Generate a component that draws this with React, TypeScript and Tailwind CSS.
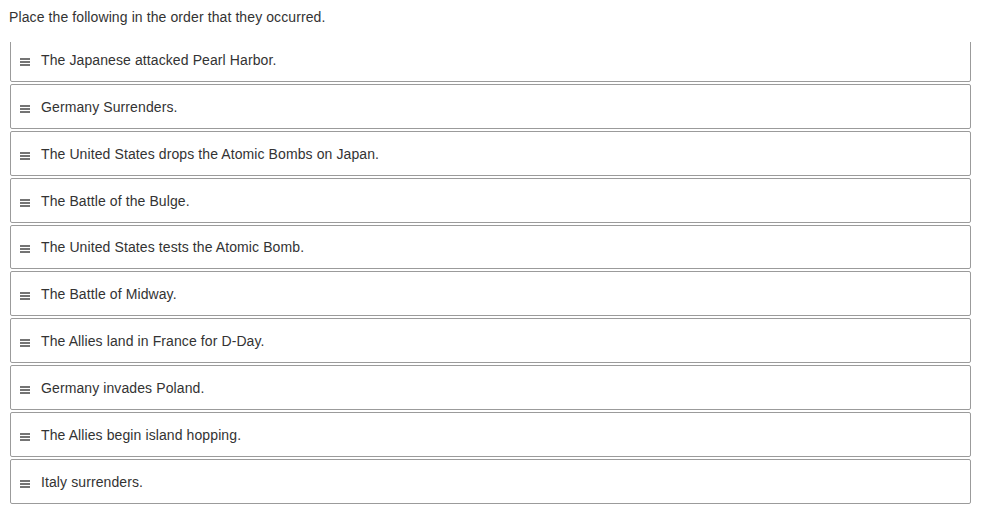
const items = [
  "The Japanese attacked Pearl Harbor.",
  "Germany Surrenders.",
  "The United States drops the Atomic Bombs on Japan.",
  "The Battle of the Bulge.",
  "The United States tests the Atomic Bomb.",
  "The Battle of Midway.",
  "The Allies land in France for D-Day.",
  "Germany invades Poland.",
  "The Allies begin island hopping.",
  "Italy surrenders.",
];

function Handle() {
  return (
    <svg width="10" height="8" viewBox="0 0 10 8" className="shrink-0 mt-[5px]">
      <rect x="0" y="0.3" width="10" height="1.4" fill="#3a3a3a" />
      <rect x="0" y="3.3" width="10" height="1.4" fill="#3a3a3a" />
      <rect x="0" y="6.3" width="10" height="1.4" fill="#3a3a3a" />
    </svg>
  );
}

export default function App() {
  return (
    <div className="w-[986px] h-[518px] bg-white overflow-hidden font-['Liberation_Sans',Arial,sans-serif] text-[14px] text-[#333]">
      <p className="pl-[9px] pt-[8px] leading-[18px] tracking-[0.1px]">Place the following in the order that they occurred.</p>

      <div className="mt-[16px] ml-[10px] w-[961px] h-[476px] overflow-hidden">
        <ul className="-mt-[5px] flex flex-col gap-[2px]">
          {items.map((text) => (
            <li
              key={text}
              className="h-[44.875px] flex items-center gap-[11px] pl-[9px] border border-[#9b9b9b] rounded-[2px] bg-white"
            >
              <Handle />
              <span className="leading-[18px] mt-[1px] tracking-[0.1px]">{text}</span>
            </li>
          ))}
        </ul>
      </div>
    </div>
  );
}
